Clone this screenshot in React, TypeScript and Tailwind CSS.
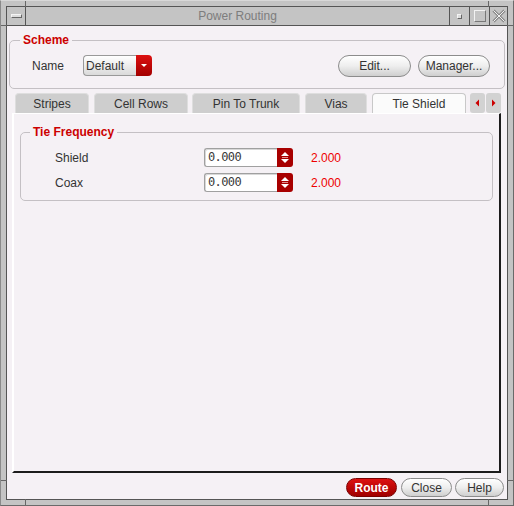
import React from 'react';

const tabs = [
  { label: 'Stripes', w: 'w-[74px]', ml: 'ml-0' },
  { label: 'Cell Rows', w: 'w-[94px]', ml: 'ml-[5px]' },
  { label: 'Pin To Trunk', w: 'w-[108px]', ml: 'ml-[4px]' },
  { label: 'Vias', w: 'w-[62px]', ml: 'ml-[5px]' },
  { label: 'Tie Shield', w: 'w-[94px]', ml: 'ml-[5px]', active: true },
];

const rows = [
  { label: 'Shield', value: '0.000', max: '2.000' },
  { label: 'Coax', value: '0.000', max: '2.000' },
];

const PillButton: React.FC<{ children: React.ReactNode; className?: string }> = ({ children, className }) => (
  <button className={`flex items-center justify-center rounded-full border border-[#8c8c8c] bg-linear-to-b from-white via-[#eeeeee] to-[#cfcfcf] text-[12px] text-[#333] ${className ?? ''}`}>
    {children}
  </button>
);

const SpinBox: React.FC<{ value: string }> = ({ value }) => (
  <div className="flex h-[19px] w-[89px]">
    <div className="flex-1 rounded-l-[3px] border border-r-0 border-[#a0a0a0] bg-white pl-[3px] font-['DejaVu_Sans_Mono',monospace] text-[12px] leading-[17px] tracking-[-0.6px] text-[#3a3a3a] shadow-[inset_1px_1px_0_#d8d8d8]">
      {value}
    </div>
    <div className="w-[16px] rounded-r-[3px] bg-[#a80000]">
      <svg width="16" height="19" viewBox="0 0 16 19">
        <polygon points="4,8 8,4 12,8" fill="#fff" />
        <line x1="5" y1="9.5" x2="11" y2="9.5" stroke="#e09090" strokeWidth="1" />
        <polygon points="4,11 8,15 12,11" fill="#fff" />
      </svg>
    </div>
  </div>
);

export default function App() {
  return (
    <div className="relative h-[506px] w-[514px] border border-[#6a6a6a] border-t-[#d8d8d8] border-l-[#8a8a8a] bg-[#c4c4c4] p-[5px] font-['Liberation_Sans',Arial,sans-serif]">
      {/* frame resize ticks */}
      <div className="absolute left-[24px] top-0 h-[6px] w-px bg-[#666]" />
      <div className="absolute left-[487px] top-0 h-[6px] w-px bg-[#666]" />
      <div className="absolute bottom-0 left-[24px] h-[6px] w-px bg-[#666]" />
      <div className="absolute bottom-0 left-[487px] h-[6px] w-px bg-[#666]" />
      <div className="absolute left-0 top-[24px] h-px w-[6px] bg-[#666]" />
      <div className="absolute left-0 top-[479px] h-px w-[6px] bg-[#666]" />
      <div className="absolute right-0 top-[24px] h-px w-[6px] bg-[#666]" />
      <div className="absolute right-0 top-[479px] h-px w-[6px] bg-[#666]" />

      <div className="flex h-full w-full flex-col border border-[#555]">
        {/* title bar */}
        <div className="flex h-[19px] shrink-0 border-b border-[#555] bg-[#c4c4c4]">
          <div className="flex w-[19px] items-center justify-center border-r border-[#555]">
            <div className="h-[4px] w-[11px] border border-[#f4f4f4] border-b-[#666] border-r-[#666] bg-[#dcdcdc]" />
          </div>
          <div className="flex flex-1 items-center justify-center text-[12px] text-[#7d7d7d]">Power Routing</div>
          <div className="flex w-[20px] items-center justify-center border-l border-[#555]">
            <div className="h-[5px] w-[5px] border border-[#f4f4f4] border-b-[#666] border-r-[#666] bg-[#dcdcdc]" />
          </div>
          <div className="flex w-[20px] items-center justify-center border-l border-[#555]">
            <div className="h-[12px] w-[12px] border border-[#777] border-l-[#f2f2f2] border-t-[#f2f2f2]" />
          </div>
          <div className="flex w-[18px] items-center justify-center border-l border-[#555]">
            <svg width="14" height="14" viewBox="0 0 14 14">
              <path d="M1.5 1.5 L12.5 12.5 M12.5 1.5 L1.5 12.5" stroke="#8a8a8a" strokeWidth="3" />
              <path d="M1.5 1.5 L12.5 12.5 M12.5 1.5 L1.5 12.5" stroke="#f2f2f2" strokeWidth="1" />
            </svg>
          </div>
        </div>

        {/* content */}
        <div className="flex flex-1 flex-col bg-[#f5f1f5] text-[#333]">
          <fieldset className="mx-[2px] mt-[7px] rounded-[5px] border border-[#c4c0c4] px-0 pb-[12px]">
            <legend className="ml-[10px] px-[3px] text-[12px] font-bold leading-[15px] text-[#cc0000]">Scheme</legend>
            <div className="mt-[7px] flex h-[21px] items-center pl-[22px] pr-[14px]">
              <span className="w-[51px] text-[12px]">Name</span>
              <div className="flex h-[21px] w-[69px]">
                <div className="flex flex-1 items-center rounded-l-[4px] border border-r-0 border-[#999] bg-linear-to-b from-white to-[#dadada] pl-[2px] text-[12px]">
                  Default
                </div>
                <div className="flex w-[16px] items-center justify-center rounded-r-[4px] bg-linear-to-b from-[#dd1111] to-[#a30000]">
                  <svg width="8" height="5" viewBox="0 0 8 5">
                    <polygon points="1,1 7,1 4,4" fill="#fff" />
                  </svg>
                </div>
              </div>
              <PillButton className="ml-auto h-[22px] w-[73px]">Edit...</PillButton>
              <PillButton className="ml-[7px] h-[22px] w-[72px]">Manager...</PillButton>
            </div>
          </fieldset>

          {/* tab widget */}
          <div className="ml-[5px] mt-[4px] flex w-[489px] flex-1 flex-col">
            <div className="flex h-[20px] shrink-0 pl-[3px]">
              {tabs.map((t) => (
                <div
                  key={t.label}
                  className={`${t.w} ${t.ml} flex items-center justify-center rounded-t-[4px] border border-b-0 pt-[1px] text-[12px] ${
                    t.active ? 'border-[#c8c8c8] bg-[#fbfbfb]' : 'border-[#dedede] bg-[#cecece]'
                  }`}
                >
                  {t.label}
                </div>
              ))}
              <div className="ml-[4px] flex gap-px">
                <div className="flex w-[15px] items-center justify-center rounded-[3px] bg-[#d2d2d2]">
                  <svg width="5" height="8" viewBox="0 0 5 8">
                    <polygon points="4,0.5 4,7.5 0.5,4" fill="#cc0000" />
                  </svg>
                </div>
                <div className="flex w-[15px] items-center justify-center rounded-[3px] bg-[#d2d2d2]">
                  <svg width="5" height="8" viewBox="0 0 5 8">
                    <polygon points="1,0.5 1,7.5 4.5,4" fill="#cc0000" />
                  </svg>
                </div>
              </div>
            </div>

            <div className="flex-1 border-b-2 border-l-2 border-r-2 border-t border-b-[#1c1c1c] border-l-white border-r-[#1c1c1c] border-t-white">
              <fieldset className="mx-[6px] mt-[11px] rounded-[5px] border border-[#c4c0c4] px-0 pb-[8px]">
                <legend className="ml-[9px] px-[3px] text-[12px] font-bold leading-[14px] text-[#cc0000]">Tie Frequency</legend>
                {rows.map((r, i) => (
                  <div key={r.label} className={`${i === 0 ? 'mt-[9px]' : 'mt-[6px]'} flex h-[19px] items-center pl-[34px]`}>
                    <span className="w-[149px] text-[12px]">{r.label}</span>
                    <SpinBox value={r.value} />
                    <span className="ml-[18px] text-[12px] text-[#ee0000]">{r.max}</span>
                  </div>
                ))}
              </fieldset>
            </div>
          </div>

          {/* bottom buttons */}
          <div className="mb-[2px] mt-[5px] flex h-[19px] shrink-0 justify-end pr-[3px]">
            <button className="flex w-[51px] items-center justify-center rounded-full border border-[#7a0000] bg-linear-to-b from-[#dd1111] to-[#a00000] text-[12px] font-bold text-white">
              Route
            </button>
            <PillButton className="ml-[4px] w-[51px]">Close</PillButton>
            <PillButton className="ml-[3px] w-[49px]">Help</PillButton>
          </div>
        </div>
      </div>
    </div>
  );
}
